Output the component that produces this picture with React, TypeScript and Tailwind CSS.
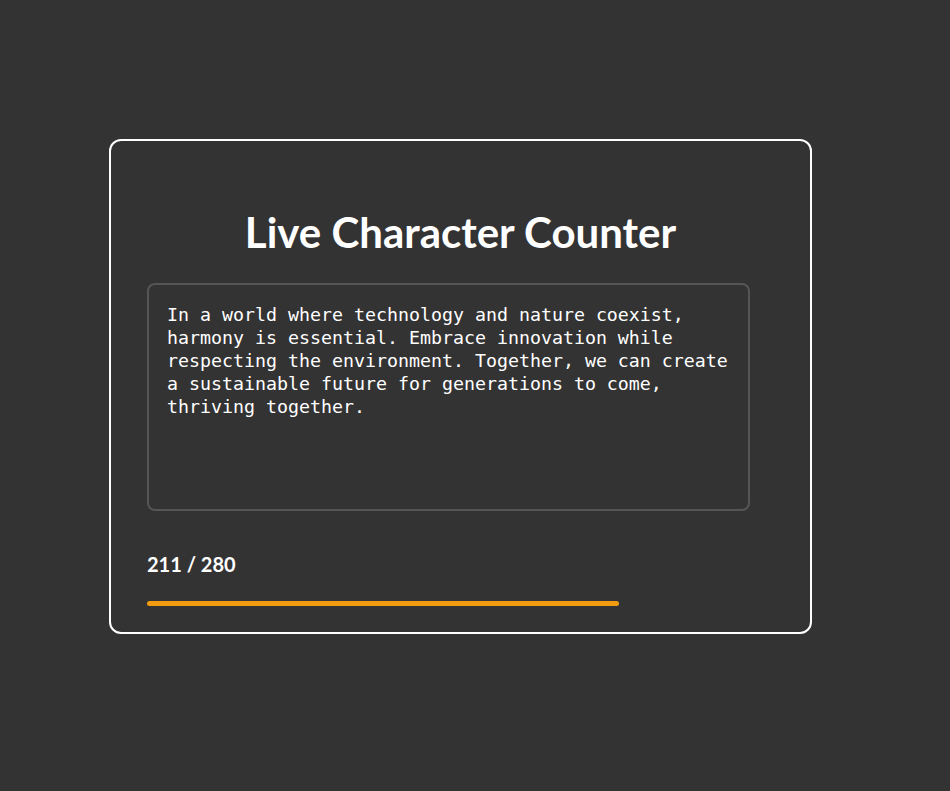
import React, { useState } from 'react';

const LIMIT = 280;

const initialText =
    'In a world where technology and nature coexist, harmony is essential. Embrace innovation while respecting the environment. Together, we can create a sustainable future for generations to come, thriving together.';

export default function App() {
    const [text, setText] = useState(initialText);
    const pct = Math.min(100, (text.length / LIMIT) * 100);

    return (
        <div className="min-h-screen w-full bg-[#333333] pt-[139px] pl-[109px]">
            <div className="w-[703px] h-[495px] border-2 border-white rounded-[12px] bg-[#333333] px-[36px] pt-[64px] flex flex-col">
                <h1 className="text-center text-white font-bold text-[42px] leading-[54px] font-['Lato',sans-serif]">
                    Live Character Counter
                </h1>
                <textarea
                    value={text}
                    onChange={(e) => setText(e.target.value.slice(0, LIMIT))}
                    spellCheck={false}
                    className="mt-[24px] w-[603px] h-[228px] resize-none rounded-[8px] border-2 border-[#555555] bg-[#333333] px-[18px] pt-[18px] text-white text-[18.27px] leading-[23px] font-['DejaVu_Sans_Mono',monospace] outline-none"
                />
                <div className="mt-[39px] text-white font-bold text-[20px] leading-[28px] font-['Lato',sans-serif]">
                    {text.length} / {LIMIT}
                </div>
                <div className="mt-[23px] h-[5px] w-full">
                    <div className="h-full rounded-full bg-[#f39c12]" style={{ width: `${pct}%` }} />
                </div>
            </div>
        </div>
    );
}
